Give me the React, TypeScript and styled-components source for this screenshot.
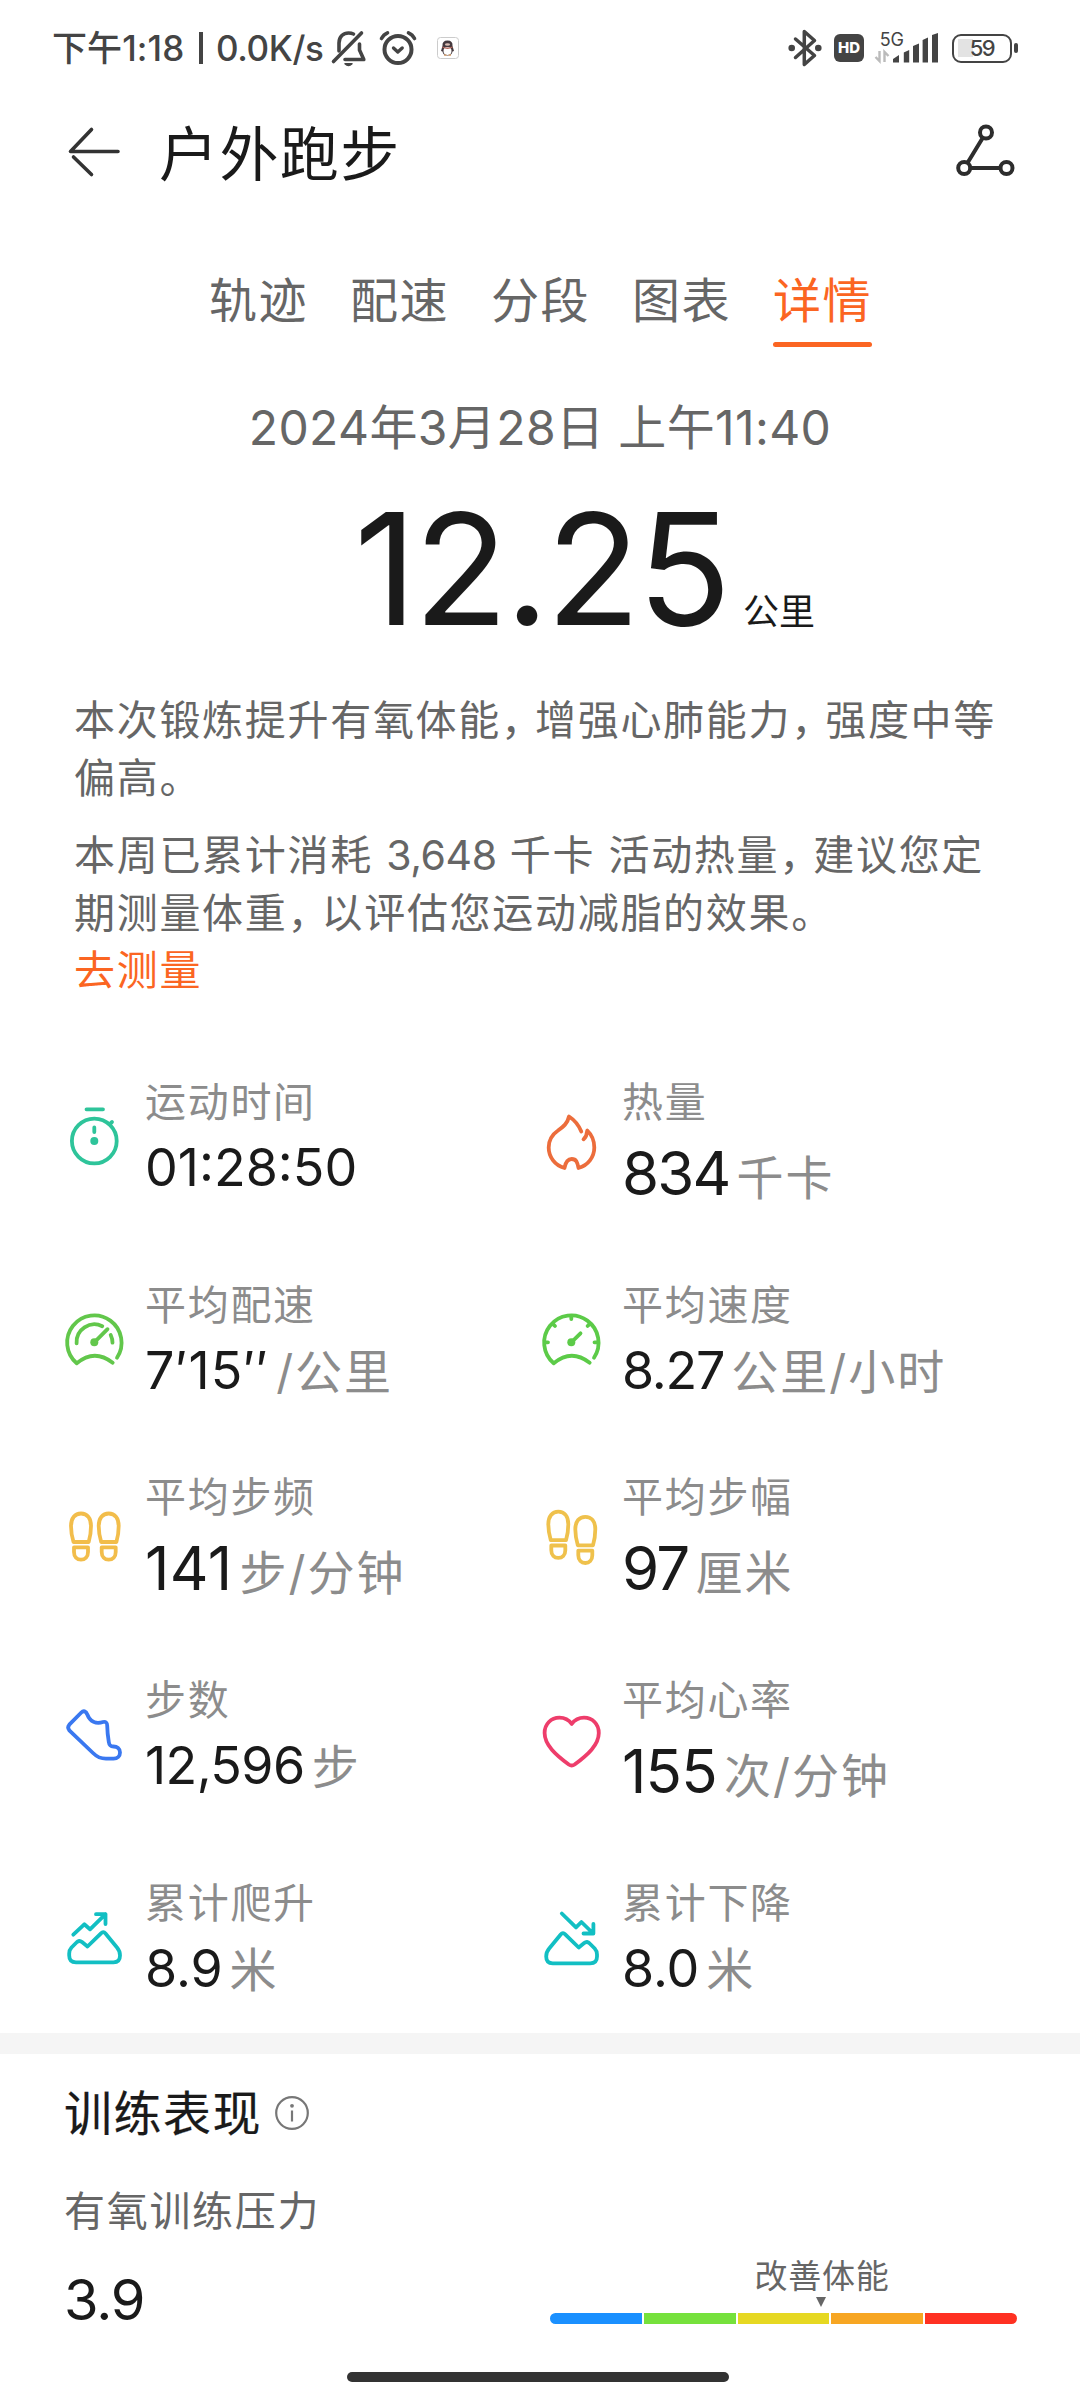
import React from 'react';
import styled, { createGlobalStyle } from 'styled-components';

const GlobalStyle = createGlobalStyle`
  * { box-sizing: border-box; }
  body {
    margin: 0;
    background: #fff;
    font-family: Inter, "Noto Sans CJK SC", sans-serif;
    color: #1a1a1a;
  }
  svg { display: block; flex: none; overflow: visible; }
`;

const Screen = styled.div`
  width: 1080px;
  height: 2400px;
  overflow: hidden;
  display: flex;
  flex-direction: column;
  background: #fff;
`;

const StatusBar = styled.div`
  height: 96px;
  padding: 0 62px 0 52px;
  display: flex;
  align-items: center;
  justify-content: space-between;
  color: #444;
`;

const StatusGroup = styled.div`
  display: flex;
  align-items: center;
`;

const Clock = styled.span<{ $width: number; $spacing: number }>`
  width: ${(p) => p.$width}px;
  font-size: 35px;
  line-height: 40px;
  font-weight: 500;
  letter-spacing: ${(p) => p.$spacing}px;
  white-space: nowrap;
`;

const Separator = styled.i`
  width: 4px;
  height: 32px;
  background: #444;
  margin: 0 13px 0 12px;
`;

const AlarmSlot = styled.span`
  margin: 0 20px 0 12px;
`;

const HdBadge = styled.span`
  width: 30px;
  height: 28px;
  margin: 0 11px 0 12px;
  border-radius: 6px;
  background: #444;
  color: #fff;
  font-size: 15px;
  line-height: 28px;
  font-weight: 800;
  text-align: center;
`;

const Network = styled.div`
  width: 30px;
  height: 34px;
  margin-right: -12px;
  display: flex;
  flex-direction: column;
  align-items: flex-end;
  justify-content: space-between;
  padding: 0 1px 3px 0;
  font-size: 18px;
  line-height: 17px;
`;

const NetworkArrows = styled.svg`
  align-self: flex-start;
`;

const Battery = styled.div`
  width: 60px;
  height: 29px;
  margin-left: 14px;
  border: 2.5px solid #444;
  border-radius: 9px;
  background: linear-gradient(#e3e3e3, #e3e3e3) 4px center / 15px 18px no-repeat;
  font-size: 22px;
  font-weight: 500;
  line-height: 24px;
  text-align: center;
  letter-spacing: -1.4px;
`;

const BatteryTip = styled.i`
  width: 4px;
  height: 10px;
  margin-left: 2px;
  border-radius: 2px;
  background: #444;
`;

const Header = styled.header`
  height: 112px;
  padding: 0 64px 0 66px;
  display: flex;
  align-items: center;
`;

const Title = styled.h1`
  flex: 1;
  margin: 0 0 0 37px;
  padding-top: 5px;
  font-size: 59px;
  line-height: 80px;
  font-weight: 400;
  letter-spacing: 1.4px;
`;

const Tabs = styled.nav`
  display: flex;
  justify-content: center;
  gap: 42px;
  margin-top: 60px;
  padding-left: 1px;
`;

const Tab = styled.a<{ $active?: boolean }>`
  width: 99px;
  font-size: 48px;
  line-height: 65px;
  letter-spacing: 1.4px;
  white-space: nowrap;
  color: ${(p) => (p.$active ? '#fb6522' : '#666')};
  &::after {
    content: '';
    display: block;
    height: 5px;
    margin-top: 9px;
    border-radius: 3px;
    background: ${(p) => (p.$active ? '#fb6522' : 'transparent')};
  }
`;

const DateLine = styled.div`
  margin-top: 50.5px;
  text-align: center;
  font-size: 48px;
  line-height: 60px;
  letter-spacing: 0.4px;
  color: #666;
`;

const Distance = styled.div`
  margin-top: 31.5px;
  padding-left: 354px;
  font-size: 155px;
  line-height: 160px;
  letter-spacing: -3.4px;
  white-space: nowrap;
`;

const DistanceUnit = styled.span`
  margin-left: 15px;
  font-size: 36px;
  line-height: 1;
  letter-spacing: 0;
`;

const Advice = styled.section`
  margin-top: 43px;
  padding: 0 76px 0 74px;
  display: flex;
  flex-direction: column;
`;

const Paragraph = styled.p`
  margin: 0 0 20px;
  font-size: 41px;
  line-height: 57.5px;
  letter-spacing: 1.7px;
  color: #666;
  white-space: nowrap;
  &:last-of-type { margin-bottom: 0; }
`;

const FullComma = styled.span`
  letter-spacing: -7px;
`;

const Figure = styled.span`
  letter-spacing: -0.4px;
`;

const Link = styled.a`
  font-size: 41px;
  line-height: 57.5px;
  letter-spacing: 1.7px;
  color: #fb6522;
`;

const Stats = styled.section`
  margin-top: 74.5px;
  padding: 0 0 30px 59px;
  display: grid;
  grid-template-columns: 477px 1fr;
  row-gap: 64px;
  align-items: start;
`;

const Stat = styled.div`
  display: flex;
  align-items: center;
  gap: 14px;
`;

const StatLabel = styled.div`
  font-size: 41px;
  line-height: 56px;
  letter-spacing: 1.7px;
  color: #8c8c8c;
`;

const StatValue = styled.div<{ $large?: boolean; $spacing: number }>`
  padding-top: 3px;
  font-size: ${(p) => (p.$large ? 60 : 52)}px;
  line-height: ${(p) => (p.$large ? 80 : 69)}px;
  letter-spacing: ${(p) => p.$spacing}px;
  white-space: nowrap;
`;

const StatUnit = styled.span`
  margin-left: 7px;
  font-size: 47px;
  line-height: 1;
  letter-spacing: 2px;
  color: #8c8c8c;
`;

const Divider = styled.div`
  flex: none;
  height: 21px;
  background: #f5f5f5;
`;

const Training = styled.section`
  padding: 30px 63px 0 64px;
`;

const SectionHead = styled.div`
  display: flex;
  align-items: center;
  gap: 13px;
`;

const SectionTitle = styled.h2`
  margin: 0;
  font-size: 48px;
  line-height: 60px;
  font-weight: 400;
  -webkit-text-stroke: 0.2px #1a1a1a;
  letter-spacing: 1.5px;
`;

const Metric = styled.div`
  margin-top: 39px;
  font-size: 41px;
  line-height: 56px;
  letter-spacing: 1.7px;
  color: #666;
`;

const ScoreRow = styled.div`
  margin-top: 19px;
  display: flex;
  justify-content: space-between;
  align-items: flex-start;
`;

const Score = styled.div`
  padding-top: 10px;
  font-size: 56px;
  line-height: 64px;
  letter-spacing: -1.2px;
`;

const Scale = styled.div`
  width: 467px;
`;

const Marker = styled.div`
  width: 142px;
  margin-bottom: 6px;
  display: flex;
  flex-direction: column;
  align-items: center;
  gap: 3px;
  font-size: 33px;
  line-height: 36px;
  letter-spacing: 0.8px;
  color: #666;
  white-space: nowrap;
`;

const Pointer = styled.i`
  margin-right: 2px;
  border: 5px solid transparent;
  border-top: 10px solid #666;
  border-bottom: 0;
`;

const Segments = styled.div`
  display: flex;
  gap: 2px;
  height: 10.5px;
  border-radius: 6px;
  overflow: hidden;
`;

const Segment = styled.i<{ $color: string }>`
  flex: 1;
  background: ${(p) => p.$color};
`;

const HomeIndicator = styled.div`
  flex: none;
  align-self: center;
  width: 382px;
  height: 10px;
  margin: auto 5px 18px 0;
  border-radius: 5px;
  background: #333;
`;

const StatIcon = styled.svg.attrs({ viewBox: '0 0 72 72', width: 72, height: 72 })<{ $color: string }>`
  fill: none;
  color: ${(p) => p.$color};
  stroke: currentColor;
  stroke-width: 3.8;
  stroke-linecap: round;
  stroke-linejoin: round;
`;

const TimerIcon = () => (
  <StatIcon $color="#2ec49a">
    <circle cx="35.3" cy="39" r="22.4" />
    <path d="M27.5 7.3H44M50.5 22.3L53 20M35.3 25.5V30" />
    <circle cx="35.3" cy="39" r="4" fill="currentColor" stroke="none" />
  </StatIcon>
);

const FlameIcon = () => (
  <StatIcon $color="#ec6d3c">
    <path d="M45.3 23.5C43 18 38.5 12 33 8.5C31.5 15.5 27.5 18.5 22 22.5C15.5 27 12.7 33 12.7 39.5C12.7 49 19 57.5 28.5 60C29.5 54.5 31 51 35.7 51S41.5 54.5 42.5 60C52 57.5 58.3 49 58.3 39.5C58.3 33 56 27 51.3 22.5C51 26.5 49.5 29.5 47.5 31.3" />
  </StatIcon>
);

const dialOutline = 'M58 52.7A27.2 27.2 0 1 0 17.7 58.3Q35.3 43.4 53.7 57.7';

const PaceIcon = () => (
  <StatIcon $color="#62c74b">
    <path d={dialOutline} />
    <path d="M17.6 38.3A17.8 17.8 0 0 1 43.3 21.2M51.7 30Q53.6 34 53.5 37.7M35.3 37.3L48.5 24.2" />
    <circle cx="35.3" cy="37.3" r="4" fill="currentColor" stroke="none" />
  </StatIcon>
);

const SpeedIcon = () => (
  <StatIcon $color="#5ccb48">
    <path d={dialOutline} />
    <path d="M35.3 11V14M9 37.3H12M58.5 37.3H61.5M17.3 19.3L19 21M53.3 19.3L51.6 21M35.3 37.3L44.5 28.3" />
    <circle cx="35.3" cy="37.3" r="4" fill="currentColor" stroke="none" />
  </StatIcon>
);

const Footprint = ({ x, y }: { x: number; y: number }) => (
  <g transform={`translate(${x} ${y})`}>
    <path d="M14.5 39C12.4 32 12 28 12 23C12 15 16 10.5 22 10.5S32 15 32 23C32 28 31.5 33 29.7 39Z" />
    <path d="M15 44.3H29V49C29 54 26 56.7 22 56.7S15 54 15 49Z" />
  </g>
);

const CadenceIcon = () => (
  <StatIcon $color="#f2bd4b">
    <Footprint x={0} y={0} />
    <Footprint x={27.7} y={0} />
  </StatIcon>
);

const StrideIcon = () => (
  <StatIcon $color="#efc14c">
    <Footprint x={0.3} y={-1.8} />
    <Footprint x={27.3} y={3.3} />
  </StatIcon>
);

const ShoeIcon = () => (
  <StatIcon $color="#3a78f0">
    <path d="M22.3 12.5L10.3 24.7Q8 27.3 10.3 30.3L34 53C38 57 42 58.7 47 58.7H54.5C58.5 58.7 61 56 61 52.5C61 48.5 58 46.5 54.5 46.5C51 46.5 50.2 45 49.8 42C48.8 36 48.3 31 48.2 25.5C48.2 22.5 46.5 21.3 44 22C37 24.3 31 21.5 28.3 14.5C27 11 24.5 10.3 22.3 12.5Z" />
  </StatIcon>
);

const HeartIcon = () => (
  <StatIcon $color="#ee3d6b">
    <path d="M35.7 18C32.5 13.5 28 11.7 23.5 11.7C15 11.7 8.6 18 8.6 27C8.6 39 20 49 32.8 58.5Q35.7 60.5 38.6 58.5C51.5 49 62.8 39 62.8 27C62.8 18 56.5 11.7 48 11.7C43.5 11.7 39 13.5 35.7 18Z" />
  </StatIcon>
);

const mountain =
  'M17.5 39.5L12.5 44.5Q10.2 47 10.2 50.5V52.5Q10.2 59.3 17 59.3H54.5Q61 59.3 61 52.5Q61 48 58 44.5L46.5 30.5Q44.3 28 42 30.3L28.5 43.5L23 39Q20 36.5 17.5 39.5Z';

const AscentIcon = () => (
  <StatIcon $color="#12bfc3">
    <path d={mountain} />
    <path d="M14.3 31.7L25.3 21.3L31 26.3L46.5 11.2M37 11.2H46.5V21" />
  </StatIcon>
);

const DescentIcon = () => (
  <StatIcon $color="#12bfc3">
    <path transform="translate(71.2 1) scale(-1 1)" d={mountain} />
    <path d="M25.8 10.5L40 24.4L45.4 19L57.2 30.5M47.5 30.5H57.4V21" />
  </StatIcon>
);

const MutedBell = () => (
  <svg width="36" height="36" viewBox="0 0 36 36" fill="none" stroke="#444" strokeWidth="3.6" strokeLinecap="round" strokeLinejoin="round">
    <path d="M2.5 31.5L30.5 3" />
    <path d="M8 21V13C8 6.5 12.5 3 17.5 3Q20.5 3 22.5 4M28.5 14V20L32.8 29.5H14" />
    <path d="M14 33.7H21Q17.5 37 14 33.7Z" strokeWidth="1.5" fill="#444" />
  </svg>
);

const AlarmIcon = () => (
  <svg width="38" height="36" viewBox="0 0 38 36" fill="none" stroke="#444" strokeWidth="4" strokeLinecap="round" strokeLinejoin="round">
    <circle cx="19" cy="19.5" r="13.5" />
    <path d="M14.5 18L18.8 22L23.2 18" strokeWidth="3.4" />
    <path d="M2.5 8.5Q4.5 4.5 8.5 2.8M35.5 8.5Q33.5 4.5 29.5 2.8" strokeWidth="3.6" />
  </svg>
);

const PenguinIcon = () => (
  <svg width="22" height="22" viewBox="0 0 22 22">
    <rect x="0.5" y="0.5" width="21" height="21" rx="3" fill="#fff" stroke="#ccc" />
    <path d="M5.5 9Q5 3.5 10.5 3.5T15.5 9L17 14L15.5 14.5Q15 18.5 10.5 18.5T5.5 14.5L4 14Z" fill="#45393e" />
    <ellipse cx="10.5" cy="14" rx="4" ry="4" fill="#fff" />
    <ellipse cx="10.5" cy="7.5" rx="2.6" ry="1.3" fill="#d9bdb4" />
    <path d="M5.5 10Q10.5 12.5 15.5 10" stroke="#b8685c" strokeWidth="1.3" fill="none" />
    <path d="M7 18.2H9.5M11.5 18.2H14" stroke="#d99b62" strokeWidth="1.2" />
  </svg>
);

const BluetoothIcon = () => (
  <svg width="34" height="38" viewBox="0 0 34 38" fill="none" stroke="#444" strokeWidth="3.5" strokeLinecap="round" strokeLinejoin="round">
    <path d="M7.5 10L26.5 26.5L16.3 35.5V2.5L26.5 11.5L7.5 28.5" />
    <circle cx="3.7" cy="19" r="3.3" fill="#444" stroke="none" />
    <circle cx="30.3" cy="19" r="3.3" fill="#444" stroke="none" />
  </svg>
);

const SignalIcon = () => (
  <svg width="45" height="30" viewBox="0 0 45 30" fill="#444">
    <path d="M0 29.5V26L6 22V29.5ZM10.8 29.5V19.5L16.2 17V29.5ZM20 29.5V13L26 10.5V29.5ZM29.6 29.5V7L35 4.5V29.5ZM39 29.5V2L45 0V29.5Z" />
  </svg>
);

const BackIcon = () => (
  <svg width="56" height="56" viewBox="0 0 56 56" fill="none" stroke="#333" strokeWidth="3.6" strokeLinecap="round" strokeLinejoin="round">
    <path d="M25.5 5.5L4.5 27.5H52M7.5 33L25.5 50.5" />
  </svg>
);

const ShareIcon = () => (
  <svg width="60" height="56" viewBox="0 0 60 56" fill="none" stroke="#2d2d2d" strokeWidth="4">
    <circle cx="30" cy="8.5" r="6" />
    <circle cx="8.2" cy="44" r="6" />
    <circle cx="50.5" cy="44" r="6" />
    <path d="M26.8 13.8L11.6 38.8M14.2 44H44.5" />
  </svg>
);

const InfoIcon = () => (
  <svg width="34" height="34" viewBox="0 0 34 34" fill="none" stroke="#777" strokeWidth="2.2">
    <circle cx="17" cy="16" r="15.8" />
    <path d="M17 13.5V24.5" />
    <circle cx="17" cy="8.8" r="1.9" fill="#777" stroke="none" />
  </svg>
);

const Comma = () => <FullComma>{'\uFF0C'}</FullComma>;

type StatItem = {
  icon: React.ReactNode;
  label: string;
  value: string;
  unit?: string;
  large?: boolean;
  spacing?: number;
};

const stats: StatItem[] = [
  { icon: <TimerIcon />, label: '运动时间', value: '01:28:50', spacing: 0 },
  { icon: <FlameIcon />, label: '热量', value: '834', unit: '千卡', large: true, spacing: -1.8 },
  { icon: <PaceIcon />, label: '平均配速', value: '7′15′′', unit: '/公里', spacing: 1.2 },
  { icon: <SpeedIcon />, label: '平均速度', value: '8.27', unit: '公里/小时', spacing: -1.2 },
  { icon: <CadenceIcon />, label: '平均步频', value: '141', unit: '步/分钟', large: true, spacing: 0.4 },
  { icon: <StrideIcon />, label: '平均步幅', value: '97', unit: '厘米', large: true, spacing: -1.8 },
  { icon: <ShoeIcon />, label: '步数', value: '12,596', unit: '步', spacing: -0.6 },
  { icon: <HeartIcon />, label: '平均心率', value: '155', unit: '次/分钟', large: true },
  { icon: <AscentIcon />, label: '累计爬升', value: '8.9', unit: '米', spacing: -0.1 },
  { icon: <DescentIcon />, label: '累计下降', value: '8.0', unit: '米', spacing: -0.1 },
];

const tabs = ['轨迹', '配速', '分段', '图表', '详情'];
const zones = ['#1a90ff', '#76e13c', '#e6d822', '#f7a623', '#ff3122'];
const scaleWidth = 467;
const zonePosition = 0.5803;

export default function App() {
  return (
    <Screen lang="zh-CN">
      <GlobalStyle />
      <StatusBar>
        <StatusGroup>
          <Clock $width={135} $spacing={0.1}>下午1:18</Clock>
          <Separator />
          <Clock $width={115} $spacing={-0.4}>0.0K/s</Clock>
          <MutedBell />
          <AlarmSlot><AlarmIcon /></AlarmSlot>
          <PenguinIcon />
        </StatusGroup>
        <StatusGroup>
          <BluetoothIcon />
          <HdBadge>HD</HdBadge>
          <Network>
            5G
            <NetworkArrows width="14" height="11" viewBox="0 0 14 11" fill="none" stroke="#bbb" strokeWidth="2.4">
              <path d="M4.5 0V10L0.5 6M9.5 11V1L13.5 5" />
            </NetworkArrows>
          </Network>
          <SignalIcon />
          <Battery>59</Battery>
          <BatteryTip />
        </StatusGroup>
      </StatusBar>

      <Header>
        <BackIcon />
        <Title>户外跑步</Title>
        <ShareIcon />
      </Header>

      <Tabs>
        {tabs.map((name) => (
          <Tab key={name} $active={name === '详情'}>{name}</Tab>
        ))}
      </Tabs>

      <DateLine>2024年3月28日 上午11:40</DateLine>
      <Distance>12.25<DistanceUnit>公里</DistanceUnit></Distance>

      <Advice>
        <Paragraph>
          本次锻炼提升有氧体能<Comma />增强心肺能力<Comma />强度中等
          <br />
          偏高。
        </Paragraph>
        <Paragraph>
          本周已累计消耗 <Figure>3,648</Figure> 千卡 活动热量<Comma />建议您定
          <br />
          期测量体重<Comma />以评估您运动减脂的效果。
        </Paragraph>
        <Link>去测量</Link>
      </Advice>

      <Stats>
        {stats.map((s) => (
          <Stat key={s.label}>
            {s.icon}
            <div>
              <StatLabel>{s.label}</StatLabel>
              <StatValue $large={s.large} $spacing={s.spacing ?? -0.8}>
                {s.value}
                {s.unit && <StatUnit>{s.unit}</StatUnit>}
              </StatValue>
            </div>
          </Stat>
        ))}
      </Stats>

      <Divider />

      <Training>
        <SectionHead>
          <SectionTitle>训练表现</SectionTitle>
          <InfoIcon />
        </SectionHead>
        <Metric>有氧训练压力</Metric>
        <ScoreRow>
          <Score>3.9</Score>
          <Scale>
            <Marker style={{ marginLeft: scaleWidth * zonePosition - 70 }}>
              改善体能
              <Pointer />
            </Marker>
            <Segments>
              {zones.map((c) => (
                <Segment key={c} $color={c} />
              ))}
            </Segments>
          </Scale>
        </ScoreRow>
      </Training>

      <HomeIndicator />
    </Screen>
  );
}
